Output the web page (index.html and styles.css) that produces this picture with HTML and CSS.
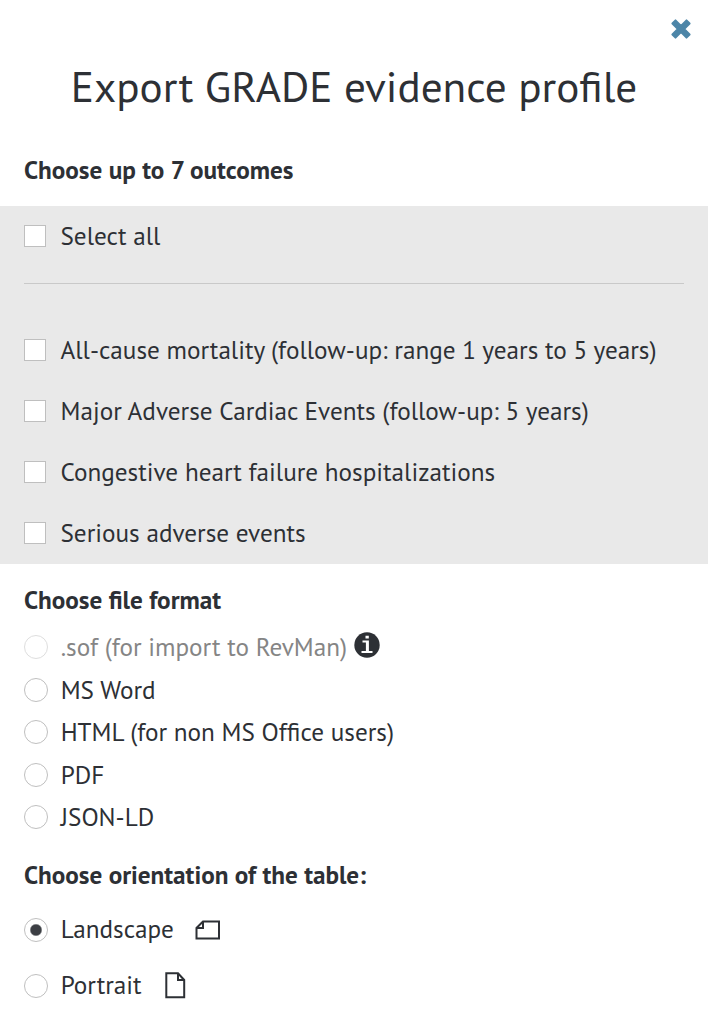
FILE: index.html
```html
<!DOCTYPE html>
<html lang="en">
<head>
	<meta charset="utf-8">
	<title>Export GRADE evidence profile</title>
	<link rel="stylesheet" href="styles.css">
</head>
<body>
	<form class="dialog">
		<button type="button" class="close" aria-label="Close">
			<svg width="22" height="22" viewBox="0 0 22 22"><path d="M5.5 2.4L11 7.9L16.5 2.4L19.6 5.5L14.1 11L19.6 16.5L16.5 19.6L11 14.1L5.5 19.6L2.4 16.5L7.9 11L2.4 5.5Z"/></svg>
		</button>
		<h1 class="title">Export GRADE evidence profile</h1>

		<h2 class="heading">Choose up to 7 outcomes</h2>
		<div class="outcomes">
			<label class="row select-all"><input type="checkbox" class="check"><span>Select all</span></label>
			<div class="outcome-list">
				<label class="row"><input type="checkbox" class="check"><span>All-cause mortality (follow-up: range 1 years to 5 years)</span></label>
				<label class="row"><input type="checkbox" class="check"><span>Major Adverse Cardiac Events (follow-up: 5 years)</span></label>
				<label class="row"><input type="checkbox" class="check"><span>Congestive heart failure hospitalizations</span></label>
				<label class="row"><input type="checkbox" class="check"><span>Serious adverse events</span></label>
			</div>
		</div>

		<h2 class="heading format-heading">Choose file format</h2>
		<div class="formats">
			<label class="row disabled"><input type="radio" name="format" class="radio" disabled><span>.sof (for import to RevMan)</span>
				<svg class="info" width="26" height="26" viewBox="0 0 26 26"><circle cx="13" cy="13" r="12.7"/><path d="M11.5 3.8h3.3v2.8h-3.3zM8.5 8.6h6.4v10.4h3.6v2H7.5v-2h4.4v-8.4H8.5z"/></svg>
			</label>
			<label class="row"><input type="radio" name="format" class="radio"><span>MS Word</span></label>
			<label class="row"><input type="radio" name="format" class="radio"><span>HTML (for non MS Office users)</span></label>
			<label class="row"><input type="radio" name="format" class="radio"><span>PDF</span></label>
			<label class="row"><input type="radio" name="format" class="radio"><span>JSON-LD</span></label>
		</div>

		<h2 class="heading orientation-heading">Choose orientation of the table:</h2>
		<div class="orientation">
			<label class="row"><input type="radio" name="orientation" class="radio" checked><span>Landscape</span>
				<svg class="page-wide" width="26" height="20" viewBox="0 0 26 20"><path d="M8 1.5H24V18.5H1.5V8zM8 1.5V8H1.5"/></svg>
			</label>
			<label class="row"><input type="radio" name="orientation" class="radio"><span>Portrait</span>
				<svg class="page-tall" width="21" height="27" viewBox="0 0 21 27"><path d="M1.3 1.3H13L19.2 8V25.2H1.3zM13 1.3V8H19.2"/></svg>
			</label>
		</div>
	</form>
</body>
</html>
```
FILE: styles.css
```css
*{box-sizing: border-box;}

body{
	margin: 0;
	background-color: white;
	color: #2d3035;
	font-family: "PT Sans", "Noto Sans", sans-serif;
	font-size: 25.2px;
}

.dialog{
	display: flex;
	flex-direction: column;
}

.close{
	align-self: flex-end;
	width: 22px;
	height: 22px;
	margin: 18px 16px 0 0;
	padding: 0;
	border: 0;
	background: none;
}
.close svg{display: block;}
.close path{
	fill: #4d86a8;
	stroke: #4d86a8;
	stroke-width: 2;
	stroke-linejoin: round;
}

.title{
	height: 60px;
	margin: 16px 0 0;
	font-size: 43.2px;
	font-weight: 400;
	line-height: 60px;
	text-align: center;
	white-space: nowrap;
}

.heading{
	height: 32px;
	margin: 38px 24px 20px;
	font-size: 25.2px;
	font-weight: 700;
	line-height: 32px;
	white-space: nowrap;
}

.outcomes{
	height: 358px;
	padding: 0 24px;
	background-color: #e9e9e9;
}
.row{
	display: flex;
	align-items: center;
	white-space: nowrap;
}
.row span{margin-top: -1px;}
.select-all{
	height: 78px;
	padding-bottom: 17px;
	border-bottom: 1px solid #c9c9c9;
}
.outcome-list{padding-top: 35px;}
.outcome-list .row{height: 61px;}

.check, .radio{
	flex: none;
	margin: 0;
	appearance: none;
	background-color: white;
	border: 1px solid #bfbfbf;
}
.check{
	width: 22px;
	height: 22px;
	margin-right: 14.5px;
}
.radio{
	width: 24px;
	height: 24px;
	margin-right: 12.7px;
	border-radius: 50%;
}
.radio:checked{background: radial-gradient(circle, #3c3f44 5px, white 6.5px);}

.format-heading{margin: 20px 24px 10px;}
.formats, .orientation{padding: 0 24px;}
.formats .row{height: 42.5px;}
.disabled span{color: #858585;}
.disabled .radio{border-color: #dedede;}
.info{
	margin: -5px 0 0 7.3px;
	fill: #2d3035;
}
.info path{fill: white;}

.orientation-heading{margin: 20px 24px 11px;}
.orientation .row{height: 56px;}
.orientation span{margin-top: -3px;}
.page-wide, .page-tall{
	fill: none;
	stroke: #2d3035;
	stroke-width: 2;
}
.page-wide{margin-left: 21.5px;}
.page-tall{margin-left: 23px;}
```
